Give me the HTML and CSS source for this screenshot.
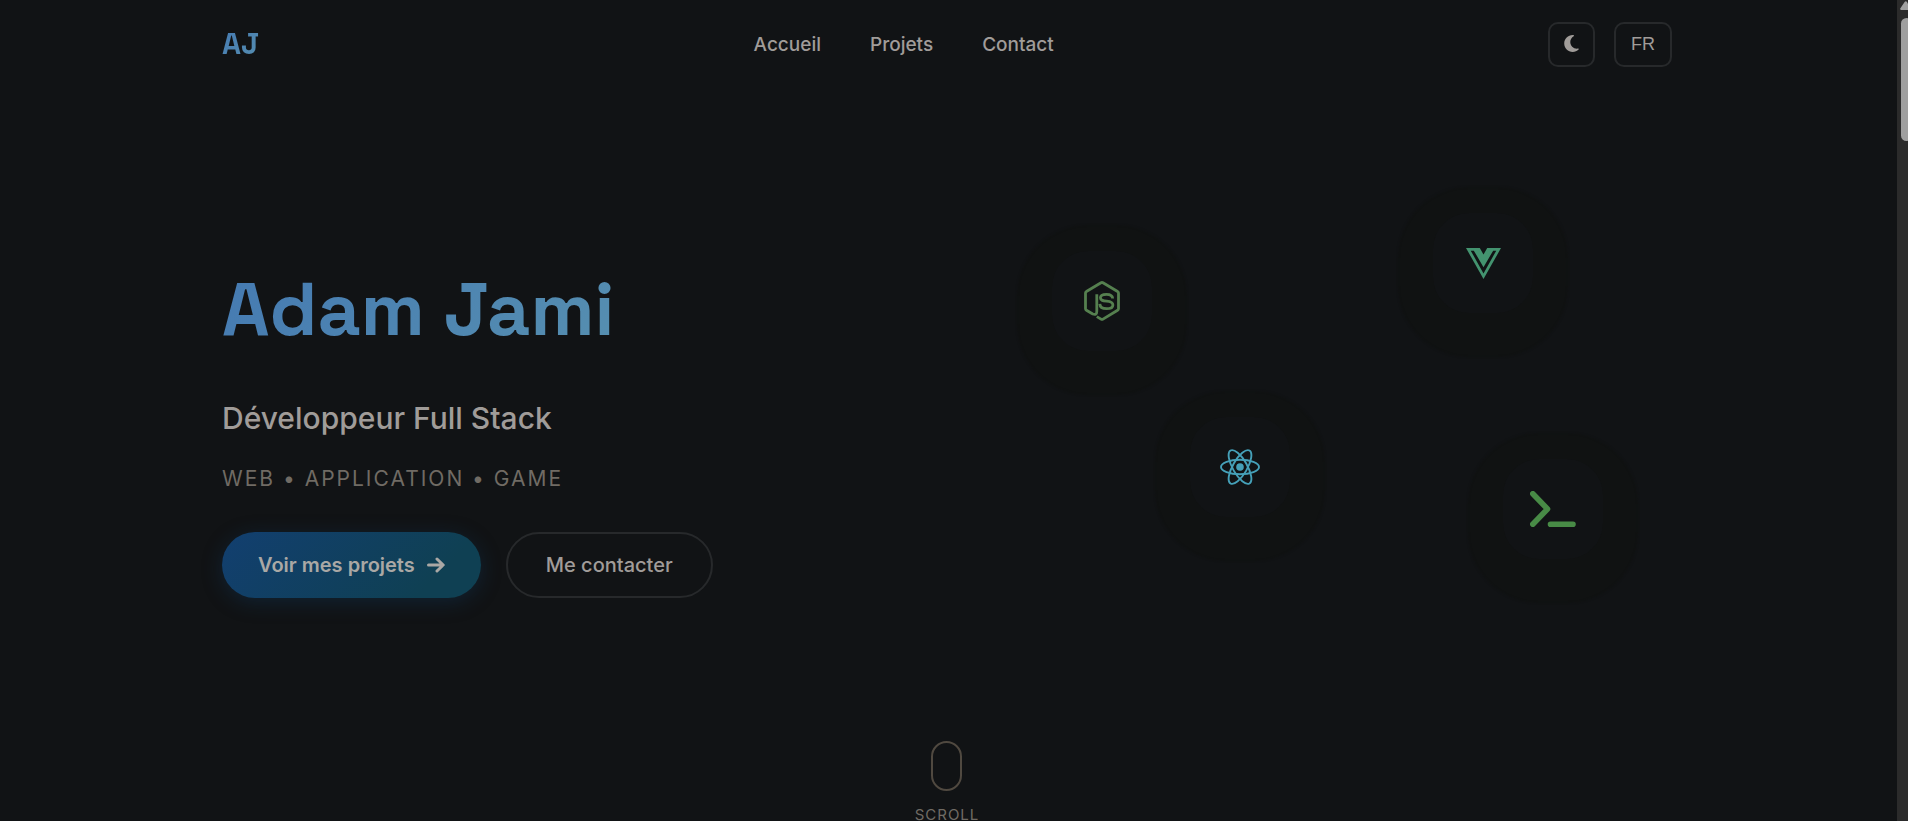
FILE: index.html
```html
<!DOCTYPE html>
<html lang="fr">
<head>
<meta charset="utf-8">
<meta name="viewport" content="width=device-width, initial-scale=1">
<title>Adam Jami</title>
<link rel="stylesheet" href="styles.css">
</head>
<body>
<header class="navbar container">
  <a class="logo" href="#">AJ</a>
  <nav class="nav-links">
    <a href="#accueil">Accueil</a>
    <a href="#projets">Projets</a>
    <a href="#contact">Contact</a>
  </nav>
  <div class="nav-actions">
    <button class="nav-button theme-button" type="button" aria-label="Changer de thème">
      <svg viewBox="0 32 384 448" width="15" height="17" fill="currentColor" aria-hidden="true"><path d="M223.500 32C100 32 0 132.300 0 256s100 224 223.500 224c60.600 0 115.500-24.200 155.800-63.400c5-4.900 6.300-12.500 3.100-18.700s-10.100-9.700-17-8.500c-9.800 1.700-19.800 2.600-30.100 2.600c-96.900 0-175.500-78.800-175.500-176c0-65.800 36-123.100 89.300-153.300c6.100-3.500 9.200-10.500 7.700-17.300s-7.300-11.900-14.300-12.500c-6.300-.5-12.600-.8-19-.8z"/></svg>
    </button>
    <button class="nav-button lang-button" type="button">FR</button>
  </div>
</header>
<main class="hero container" id="accueil">
  <section class="hero-text">
    <h1>Adam Jami</h1>
    <h2>Développeur Full Stack</h2>
    <p class="tagline">WEB • APPLICATION • GAME</p>
    <div class="hero-buttons">
      <a class="button button-primary" href="#projets">Voir mes projets
        <svg viewBox="0 0 18 16" width="18" height="16" fill="none" stroke="currentColor" stroke-width="3" stroke-linecap="round" stroke-linejoin="round" aria-hidden="true"><path d="M1.500 8h14.500M10 2l6.200 6-6.200 6"/></svg>
      </a>
      <a class="button button-outline" href="#contact">Me contacter</a>
    </div>
  </section>
  <div class="hero-visual">
    <div class="tech-card tech-node">
      <svg viewBox="0 0 36 40" width="36" height="40" fill="none" stroke="currentColor" stroke-width="2.800" stroke-linejoin="round" aria-hidden="true"><path d="M12.800 13.200V30.200Q12.800 34.500 8.800 33L2.400 29.200Q1.500 28.700 1.500 27.700V12Q1.500 11 2.400 10.500L17 1.800Q18 1.200 19 1.800L33.600 10.500Q34.500 11 34.500 12V27.700Q34.500 28.700 33.600 29.200L19 38.100Q18 38.700 17 38.100L12.800 35.600"/><path d="M28.700 17.500C28.500 14.500 26.500 13.300 22.500 13.300C18.500 13.300 16.400 14.500 16.400 16.800C16.400 19.500 19 19.800 22.600 20.200C26.500 20.600 28.900 21.200 28.900 23.900C28.900 26.500 26.700 27.700 22.600 27.700C18 27.700 16 26.200 15.800 22.800"/></svg>
    </div>
    <div class="tech-card tech-vue">
      <svg viewBox="0 0 34 30" width="35" height="31" fill="currentColor" aria-hidden="true"><path fill-rule="evenodd" d="M0 0H34L17 30ZM4.600 2.500L17 24.600L29.400 2.500H26.400L17 18.600L7.600 2.500Z"/><path class="vue-notch" d="M13.400 0H20.600L17 6.300Z"/></svg>
    </div>
    <div class="tech-card tech-react">
      <svg viewBox="0 0 40 36" width="40" height="36" fill="none" stroke="currentColor" stroke-width="1.900" aria-hidden="true"><ellipse cx="20" cy="18" rx="19" ry="7.200"/><ellipse cx="20" cy="18" rx="19" ry="7.200" transform="rotate(60 20 18)"/><ellipse cx="20" cy="18" rx="19" ry="7.200" transform="rotate(120 20 18)"/><circle cx="20" cy="18" r="3.800" fill="currentColor" stroke="none"/></svg>
    </div>
    <div class="tech-card tech-terminal">
      <svg viewBox="0 0 46 36" width="46" height="36" fill="none" stroke="currentColor" stroke-width="5.600" stroke-linecap="round" stroke-linejoin="round" aria-hidden="true"><path d="M2.800 2.800L17.500 18L2.800 33.200M20.500 33.200H43"/></svg>
    </div>
  </div>
</main>
<a class="scroll-hint" href="#projets"><span class="mouse"></span>SCROLL</a>
<div class="scrollbar" aria-hidden="true">
  <svg viewBox="0 0 11 10" width="11" height="10" fill="currentColor"><path d="M4 10Q2.600 9.500 3.400 8.300L7.600 2Q8.800 .5 10 2L14 10Z"/></svg>
  <div class="scroll-thumb"></div>
</div>
</body>
</html>
```
FILE: styles.css
```css
* { box-sizing: border-box; }

body {
  margin: 0;
  padding-right: 14px;
  height: 100vh;
  overflow: hidden;
  background: #111315;
  color: #a09c99;
  font-family: Inter, sans-serif;
}

a { color: inherit; text-decoration: none; }
svg { display: block; }

.container {
  width: calc(100% - 64px);
  max-width: 1450px;
  margin: 0 auto;
}

.navbar {
  display: flex;
  align-items: center;
  justify-content: space-between;
  height: 89px;
}

.logo,
h1 {
  font-family: "Space Grotesk", Inter, sans-serif;
  font-weight: 700;
  background: linear-gradient(135deg, #457ab2, #568fb0);
  -webkit-background-clip: text;
  background-clip: text;
  color: transparent;
}

.logo { font-size: 30px; line-height: 36px; padding-bottom: 2px; }

.nav-links {
  display: flex;
  gap: 49px;
  font-size: 19px;
  font-weight: 500;
}

.nav-actions { display: flex; gap: 19px; }

.nav-button {
  display: flex;
  align-items: center;
  justify-content: center;
  height: 45px;
  border: 2px solid #27292b;
  border-radius: 10px;
  background: transparent;
  color: #a09c99;
  font: 18px "Liberation Sans", sans-serif;
}

.theme-button { width: 47px; padding-bottom: 3px; }
.lang-button { width: 58px; }

.hero {
  display: grid;
  grid-template-columns: 1fr 1fr;
  gap: 64px;
  align-items: center;
  height: 700px;
}

.hero-text { margin-bottom: 13px; }

h1, h2, p { margin: 0; }

h1 {
  width: fit-content;
  font-size: 75px;
  line-height: 84px;
}

h2 {
  margin-top: 42px;
  font-size: 30px;
  font-weight: 500;
  line-height: 50px;
}

.tagline {
  margin-top: 21px;
  color: #706b64;
  font-size: 21px;
  line-height: 30px;
  letter-spacing: 2px;
}

.hero-buttons { display: flex; gap: 25px; margin-top: 38px; }

.button {
  display: flex;
  align-items: center;
  gap: 12px;
  height: 66px;
  padding: 0 36px;
  border-radius: 33px;
  font-size: 20px;
  font-weight: 500;
}

.button-primary {
  background: linear-gradient(135deg, #123f70, #0f4053 80%);
  box-shadow: 0 4px 20px rgba(17, 64, 105, 0.35);
  color: #aaa8a5;
  font-weight: 600;
}

.button-outline {
  padding: 0 38px;
  border: 2px solid #27292b;
}

.hero-visual { position: relative; height: 500px; }

.tech-card {
  position: absolute;
  display: flex;
  align-items: center;
  justify-content: center;
  width: 100px;
  height: 100px;
  border-radius: 36px;
  background: #111315;
  box-shadow: 0 9px 2px 35px #101212;
}

.tech-node { top: 62px; left: 73px; color: #55804f; }
.tech-vue { top: 24px; right: 20%; color: #43936f; }
.tech-react { top: 228px; left: 211px; color: #45a0b8; }
.tech-terminal { top: 270px; right: 69px; color: #488b46; }
.vue-notch { fill: #111315; }

.scroll-hint {
  display: flex;
  flex-direction: column;
  align-items: center;
  gap: 17px;
  width: fit-content;
  margin: -48px auto 0;
  color: #706b64;
  font-size: 15px;
  line-height: 13px;
  letter-spacing: 1px;
}

.mouse {
  width: 31px;
  height: 50px;
  border: 2px solid #504940;
  border-radius: 16px;
}

.scrollbar {
  position: fixed;
  top: 0;
  right: 0;
  width: 11px;
  height: 100%;
  overflow: hidden;
  background: #2b2b2b;
  color: #9f9f9f;
}

.scroll-thumb {
  width: 11px;
  height: 123px;
  margin: 8px 0 0 4px;
  border-radius: 6px;
  background: #9f9f9f;
}
```
